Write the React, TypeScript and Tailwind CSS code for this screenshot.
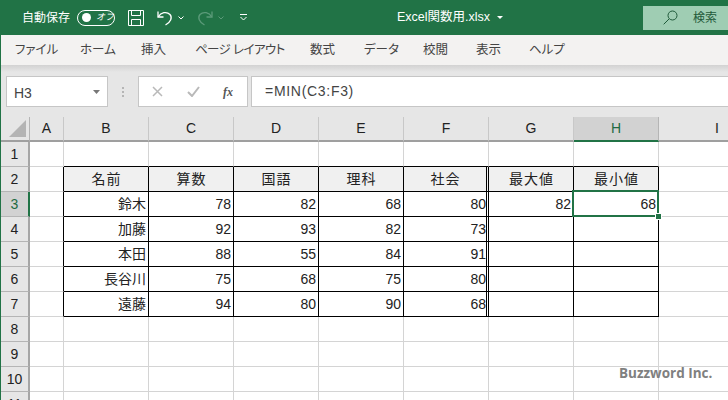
const font = "[font-family:'Liberation_Sans','Noto_Sans_CJK_JP',sans-serif]";

const columns = ["A", "B", "C", "D", "E", "F", "G", "H", "I"];

// rows 2-7 hold the table, the rest is empty sheet
const sheet: Record<number, string[]> = {
  2: ["", "名前", "算数", "国語", "理科", "社会", "最大値", "最小値", ""],
  3: ["", "鈴木", "78", "82", "68", "80", "82", "68", ""],
  4: ["", "加藤", "92", "93", "82", "73", "", "", ""],
  5: ["", "本田", "88", "55", "84", "91", "", "", ""],
  6: ["", "長谷川", "75", "68", "75", "80", "", "", ""],
  7: ["", "遠藤", "94", "80", "90", "68", "", "", ""],
};

const rows = [1, 2, 3, 4, 5, 6, 7, 8, 9, 10, 11];
const tabs = [
  { label: "ファイル", width: "w-[37px]", extra: "" },
  { label: "ホーム", width: "w-[33px]", extra: "" },
  { label: "挿入", width: "w-[26px]", extra: "" },
  { label: "ページ レイアウト", width: "w-[87px]", extra: "tracking-[-0.6px]" },
  { label: "数式", width: "w-[26px]", extra: "" },
  { label: "データ", width: "w-[31px]", extra: "" },
  { label: "校閲", width: "w-[25px]", extra: "" },
  { label: "表示", width: "w-[25px]", extra: "" },
  { label: "ヘルプ", width: "w-[32px]", extra: "" },
];

const Caret = ({ color = "white" }: { color?: string }) => (
  <svg width="6" height="4" viewBox="0 0 6 4">
    <path d="M0.5 0.5 L3 3 L5.5 0.5" fill="none" stroke={color} strokeWidth="1" />
  </svg>
);

const TitleBar = () => {
  return (
    <div className="relative flex h-[35px] items-center bg-[#217346] text-white">
      <span className="ml-[22px] w-[48px] whitespace-nowrap text-[12px]">自動保存</span>
      <div className="ml-[7px] flex h-[16px] w-[38px] items-center rounded-full border border-white pl-[4px]">
        <div className="h-[9px] w-[9px] rounded-full bg-white" />
        <span className="ml-[5px] text-[9px] leading-none whitespace-nowrap italic">オフ</span>
      </div>
      <svg className="ml-[13px]" width="16" height="16" viewBox="0 0 16 16" fill="none" stroke="white" strokeWidth="1">
        <path d="M0.5 0.5 H15.5 V15.5 H0.5 Z" />
        <path d="M3.5 0.5 V5.5 H12.5 V0.5" />
        <path d="M3.5 15.5 V9.5 H12.5 V15.5" />
      </svg>
      <svg className="ml-[13px]" width="16" height="16" viewBox="0 0 16 16" fill="none" stroke="white" strokeWidth="1.3">
        <path d="M1 1.5 V7 H6.5" />
        <path d="M1.2 6.8 C4 2.5 9.5 1 13 4.5 C15.5 7.5 14 12 8.5 15" />
      </svg>
      <div className="ml-[5px]">
        <Caret />
      </div>
      <svg className="ml-[13px]" width="16" height="16" viewBox="0 0 16 16" fill="none" stroke="#5b9a79" strokeWidth="1.3">
        <path d="M15 1.5 V7 H9.5" />
        <path d="M14.8 6.8 C12 2.5 6.5 1 3 4.5 C0.5 7.5 2 12 7.5 15" />
      </svg>
      <div className="ml-[5px]">
        <Caret color="#5b9a79" />
      </div>
      <svg className="ml-[16px]" width="7" height="7" viewBox="0 0 7 7" fill="none" stroke="white">
        <path d="M0 0.5 H7" />
        <path d="M0.5 3 L3.5 6 L6.5 3" />
      </svg>
      <span className="ml-[150px] whitespace-nowrap text-[12.5px]">Excel関数用.xlsx</span>
      <svg className="ml-[7px]" width="6" height="3" viewBox="0 0 6 3">
        <path d="M0 0 H6 L3 3 Z" fill="white" />
      </svg>
      <div className="ml-auto flex h-[24px] w-[85px] items-center bg-[#9fcdb3] text-[#1f5a3a]">
        <svg className="ml-[20px]" width="15" height="15" viewBox="0 0 15 15" fill="none" stroke="#1f5a3a" strokeWidth="1">
          <circle cx="9.5" cy="5.5" r="4.5" />
          <path d="M6 9 L0.7 14.3" />
        </svg>
        <span className="ml-[15px] text-[12px] whitespace-nowrap">検索</span>
      </div>
    </div>
  );
};

const Ribbon = () => {
  return (
    <div className="flex h-[30px] items-center gap-[28px] bg-[#f3f2f1] pt-[1px] pl-[14px] text-[#444444]">
      {tabs.map((tab) => (
        <span
          key={tab.label}
          className={`${tab.width} ${tab.extra} text-[12.5px] whitespace-nowrap [font-feature-settings:'palt']`}
        >
          {tab.label}
        </span>
      ))}
    </div>
  );
};

const FormulaBar = () => {
  return (
    <div className="h-[52px] bg-[#e6e6e6]">
      <div className="h-[7px] bg-gradient-to-b from-[#d2d2d2] to-[#e6e6e6]" />
      <div className="mt-[4px] flex h-[31px] items-stretch">
        <div className="ml-[5px] flex w-[102px] items-center justify-between border border-[#c6c6c6] bg-white pr-[7px] pl-[7px] text-[14px] text-[#444444]">
          <span className="pt-[3px]">H3</span>
          <svg width="7" height="4" viewBox="0 0 7 4">
            <path d="M0 0 H7 L3.5 4 Z" fill="#777777" />
          </svg>
        </div>
        <div className="flex w-[30px] items-center justify-center">
          <div className="flex flex-col gap-[2px]">
            <div className="h-[2px] w-[2px] bg-[#b5b5b5]" />
            <div className="h-[2px] w-[2px] bg-[#b5b5b5]" />
            <div className="h-[2px] w-[2px] bg-[#b5b5b5]" />
          </div>
        </div>
        <div className="flex w-[110px] items-center border border-[#c6c6c6] bg-white">
          <svg className="ml-[13px]" width="11" height="11" viewBox="0 0 11 11" fill="none" stroke="#b9b9b9" strokeWidth="1.5">
            <path d="M1 1 L10 10 M10 1 L1 10" />
          </svg>
          <svg className="ml-[24px]" width="13" height="11" viewBox="0 0 13 11" fill="none" stroke="#b9b9b9" strokeWidth="2">
            <path d="M1 6 L5 10 L12 1" />
          </svg>
          <span className="ml-[23px] [font-family:'Liberation_Serif',serif] text-[12px] font-bold text-[#555555] italic">
            fx
          </span>
        </div>
        <div className="ml-[3px] flex flex-1 items-center border-y border-l border-[#c6c6c6] bg-white pl-[13px] text-[14px] tracking-[0.7px] text-[#444444]">
          =MIN(C3:F3)
        </div>
      </div>
    </div>
  );
};

const cellClass = (col: number, row: number) => {
  const inTableRow = row >= 2 && row <= 7;
  const isHead = row === 2 && col >= 1 && col <= 7;
  const right = inTableRow && col <= 7 ? "border-r-black" : "border-r-[#d4d4d4]";
  const bottom = col >= 1 && col <= 7 && row >= 1 && row <= 7 ? "border-b-black" : "border-b-[#d4d4d4]";
  // column F closes with the double rule
  const double = inTableRow && col === 5 ? "border-r-[3px] [border-right-style:double]" : "border-r";
  const head = isHead ? "justify-center bg-[#f0f0f0] pl-[1px] tracking-[1px]" : "justify-end bg-white";
  const pad = isHead || col === 5 ? "" : "pr-[2px]";
  return `${right} ${bottom} ${double} ${head} ${pad}`;
};

const Sheet = () => {
  return (
    <div className="relative grid grid-cols-[29px_34px_85px_85px_85px_85px_85px_85px_85px_117px] auto-rows-[25px] text-[14px] text-[#222222]">
      <div className="flex items-end justify-end border-r border-b-2 border-r-[#b5b5b5] border-b-[#9f9f9f] bg-[#e6e6e6] pr-[2px] pb-[2px]">
        <svg width="18" height="18" viewBox="0 0 18 18">
          <path d="M17 0 V17 H0 Z" fill="#b4b4b4" />
        </svg>
      </div>
      {columns.map((name) => (
        <div
          key={name}
          className={
            name === "H"
              ? "flex items-center justify-center border-r border-b-2 border-r-[#b5b5b5] border-b-[#217346] bg-[#d2d2d2] text-[#1f6b43]"
              : "flex items-center justify-center border-r border-b-2 border-r-[#c8c8c8] border-b-[#9f9f9f] bg-[#e6e6e6]"
          }
        >
          {name}
        </div>
      ))}
      {rows.map((row) => (
        <div key={row} className="contents">
          <div
            className={
              row === 3
                ? "flex items-center justify-center border-r-2 border-b border-r-[#217346] border-b-[#b5b5b5] bg-[#d2d2d2] text-[#1f6b43]"
                : "flex items-center justify-center border-r-2 border-b border-r-[#a6a6a6] border-b-[#b5b5b5] bg-[#e6e6e6]"
            }
          >
            {row}
          </div>
          {columns.map((name, col) => (
            <div key={name} className={`flex items-center border-b pt-[1px] ${cellClass(col, row)}`}>
              {sheet[row]?.[col]}
            </div>
          ))}
        </div>
      ))}
      {/* selected cell H3 */}
      <div className="absolute top-[73px] left-[571px] h-[27px] w-[87px] border-2 border-[#217346]" />
      <div className="absolute top-[96px] left-[654px] box-content h-[5px] w-[5px] border border-white bg-[#217346]" />
    </div>
  );
};

export default function App() {
  return (
    <div className={`relative h-[400px] w-[728px] overflow-hidden bg-white ${font}`}>
      <TitleBar />
      <div className="border-l border-[#217346]">
        <Ribbon />
        <FormulaBar />
        <Sheet />
      </div>
      <span className="absolute top-[363px] left-[619px] [font-family:'Open_Sans',sans-serif] text-[13.5px] font-bold text-[#808080]">
        Buzzword Inc.
      </span>
    </div>
  );
}
